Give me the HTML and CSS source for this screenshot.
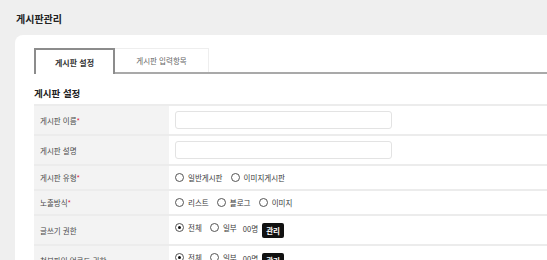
FILE: index.html
```html
<!DOCTYPE html>
<html lang="ko">
<head>
	<meta charset="UTF-8">
	<title>게시판관리</title>
	<link rel="stylesheet" href="styles.css">
</head>
<body>
	<h1 class="page-title">게시판관리</h1>
	<div class="card">
		<ul class="tabs">
			<li class="tab active">게시판 설정</li>
			<li class="tab">게시판 입력항목</li>
		</ul>
		<h2 class="section-title">게시판 설정</h2>
		<table class="form-table">
			<tr class="row-tall">
				<th>게시판 이름<span class="req">*</span></th>
				<td><input type="text" class="text-input"></td>
			</tr>
			<tr class="row-tall">
				<th>게시판 설명</th>
				<td><input type="text" class="text-input"></td>
			</tr>
			<tr class="row-short">
				<th>게시판 유형<span class="req">*</span></th>
				<td>
					<label class="radio"><span class="dot"></span>일반게시판</label>
					<label class="radio"><span class="dot"></span>이미지게시판</label>
				</td>
			</tr>
			<tr class="row-short">
				<th>노출방식<span class="req">*</span></th>
				<td>
					<label class="radio"><span class="dot"></span>리스트</label>
					<label class="radio"><span class="dot"></span>블로그</label>
					<label class="radio"><span class="dot"></span>이미지</label>
				</td>
			</tr>
			<tr class="row-tall">
				<th>글쓰기 권한</th>
				<td>
					<label class="radio"><span class="dot on"></span>전체</label>
					<label class="radio short"><span class="dot"></span>일부</label>
					<span class="count">00명</span>
					<button class="btn-manage">관리</button>
				</td>
			</tr>
			<tr class="row-tall">
				<th>첨부파일 업로드 권한</th>
				<td>
					<label class="radio"><span class="dot on"></span>전체</label>
					<label class="radio short"><span class="dot"></span>일부</label>
					<span class="count">00명</span>
					<button class="btn-manage">관리</button>
				</td>
			</tr>
		</table>
	</div>
</body>
</html>
```

FILE: styles.css
```css
body {
	margin: 0;
	background: #efefef;
	font-family: "Noto Sans CJK KR", "Noto Sans", sans-serif;
	color: #333;
	overflow: hidden;
}

.page-title {
	margin: 0;
	padding: 11px 0 0 16px;
	height: 24px;
	font-size: 10px;
	line-height: 16px;
	font-weight: 700;
	color: #222;
}

.card {
	margin-left: 15px;
	background: #fff;
	border-radius: 8px 0 0 0;
	padding: 13px 0 0 19px;
	height: 300px;
}

.tabs {
	display: flex;
	margin: 0;
	padding: 0;
	list-style: none;
	border-bottom: 2px solid #a9a9a9;
	height: 24px;
}

.tab {
	width: 94px;
	height: 24px;
	line-height: 24px;
	text-align: center;
	font-size: 7.5px;
	color: #666;
	border-top: 1px solid #eee;
	border-right: 1px solid #eee;
	box-sizing: border-box;
}

.tab.active {
	width: 81px;
	height: 26px;
	line-height: 25px;
	border: 2px solid #8c8c8c;
	border-bottom: 0;
	background: #fff;
	font-weight: 700;
	font-size: 8px;
	color: #333;
}

.section-title {
	margin: 12px 0 4px;
	font-size: 9.5px;
	line-height: 14px;
	font-weight: 700;
	color: #222;
}

.form-table {
	width: 520px;
	border-collapse: collapse;
	border-top: 2px solid #ececec;
}

.form-table th,
.form-table td {
	border-bottom: 2px solid #ececec;
	padding: 0 6px;
	font-size: 7.5px;
	text-align: left;
	vertical-align: middle;
}

.form-table th {
	width: 123px;
	background: #f3f3f3;
	font-weight: 400;
	color: #4a4a4a;
}

.form-table td {
	color: #3a3a3a;
}

.row-tall {
	height: 30px;
}

.row-short {
	height: 25px;
}

.req {
	color: #e0203a;
}

.text-input {
	display: block;
	width: 217px;
	height: 18px;
	box-sizing: border-box;
	border: 1px solid #e3e3e3;
	border-radius: 3px;
	margin: 0;
}

.radio {
	display: inline-flex;
	align-items: center;
	margin-right: 6px;
}

.radio.short {
	margin-right: 4px;
}

.dot {
	width: 9px;
	height: 9px;
	border: 1px solid #555;
	border-radius: 50%;
	box-sizing: border-box;
	margin-right: 4px;
	position: relative;
}

.dot.on::after {
	content: "";
	position: absolute;
	left: 2px;
	top: 2px;
	width: 3px;
	height: 3px;
	border-radius: 50%;
	background: #111;
}

.btn-manage {
	height: 15px;
	margin-left: 2px;
	padding: 0 4px;
	border: 0;
	border-radius: 2px;
	background: #111;
	color: #fff;
	font-family: inherit;
	font-size: 7.5px;
	font-weight: 700;
	vertical-align: middle;
}
```
